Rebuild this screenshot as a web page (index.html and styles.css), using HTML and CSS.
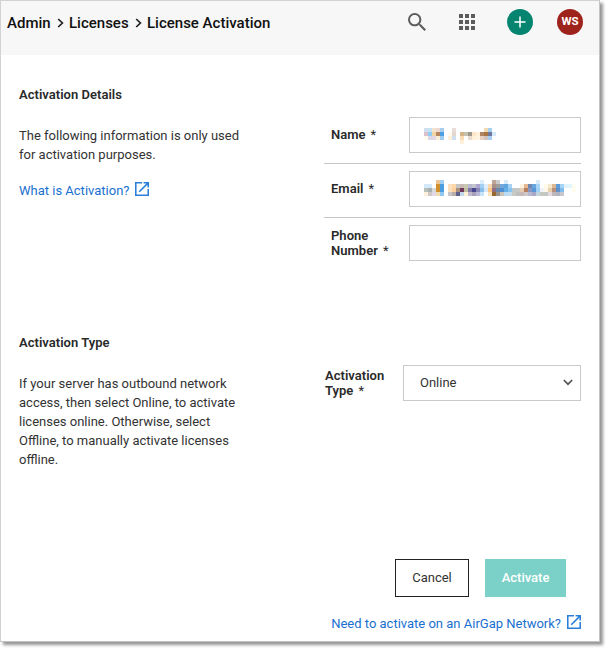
FILE: index.html
```html
<!DOCTYPE html>
<html lang="en">
<head>
<meta charset="utf-8">
<title>License Activation</title>
<link rel="stylesheet" href="styles.css">
</head>
<body>
<div class="window">
  <header class="topbar">
    <nav class="crumbs">
      <span class="crumb crumb-admin">Admin</span>
      <svg class="sep" viewBox="0 0 7 10"><path d="M1.2 1 5.4 5 1.2 9"/></svg>
      <span class="crumb crumb-licenses">Licenses</span>
      <svg class="sep" viewBox="0 0 7 10"><path d="M1.2 1 5.4 5 1.2 9"/></svg>
      <span class="crumb crumb-current">License Activation</span>
    </nav>
    <div class="tools">
      <svg class="search" viewBox="3 3 17.5 17.5"><path d="M15.5 14h-.79l-.28-.27A6.471 6.471 0 0 0 16 9.500 6.500 6.500 0 1 0 9.500 16c1.610 0 3.090-.59 4.230-1.570l.27.28v.79l5 4.990L20.490 19l-4.990-5zm-6 0C7.010 14 5 11.990 5 9.500S7.010 5 9.500 5 14 7.010 14 9.500 11.990 14 9.500 14z"/></svg>
      <svg class="apps" viewBox="0 0 16 16"><path d="M0 0h4v4H0zM6 0h4v4H6zM12 0h4v4h-4zM0 6h4v4H0zM6 6h4v4H6zM12 6h4v4h-4zM0 12h4v4H0zM6 12h4v4H6zM12 12h4v4h-4z"/></svg>
      <span class="circle add"><svg viewBox="0 0 12 12"><path d="M6 .5v11M.5 6h11"/></svg></span>
      <span class="circle avatar">WS</span>
    </div>
  </header>
  <section class="section">
    <div class="about">
      <h2>Activation Details</h2>
      <p class="text-details">The following information is only used<br>for activation purposes.</p>
      <a class="link">What is Activation?<svg class="ext" viewBox="3 3 18 18"><path d="M19 19H5V5h7V3H3v18h18v-9h-2v7zM14 3v2h3.590l-9.830 9.830 1.410 1.410L19 6.410V10h2V3h-7z"/></svg></a>
    </div>
    <div class="fields">
      <div class="row"><div class="label">Name<i>*</i></div><div class="input"><svg class="mosaic" id="name"></svg></div></div>
      <div class="row"><div class="label">Email<i>*</i></div><div class="input email"><svg class="mosaic" id="email"></svg></div></div>
      <div class="row"><div class="label">Phone<br>Number<i>*</i></div><div class="input"></div></div>
    </div>
  </section>
  <section class="section">
    <div class="about">
      <h2>Activation Type</h2>
      <p>If your server has outbound network<br>access, then select Online, to activate<br>licenses online. Otherwise, select<br>Offline, to manually activate licenses<br>offline.</p>
    </div>
    <div class="fields type">
      <div class="row"><div class="label">Activation<br>Type<i>*</i></div><div class="input select"><span>Online</span><svg class="caret" viewBox="0 0 10 7"><path d="M.8 1 5 5.200 9.200 1"/></svg></div></div>
    </div>
  </section>
  <footer class="footer">
    <div class="buttons"><span class="btn cancel">Cancel</span><span class="btn activate">Activate</span></div>
    <a class="link">Need to activate on an AirGap Network?<svg class="ext" viewBox="3 3 18 18"><path d="M19 19H5V5h7V3H3v18h18v-9h-2v7zM14 3v2h3.590l-9.830 9.830 1.410 1.410L19 6.410V10h2V3h-7z"/></svg></a>
  </footer>
</div>
<script src="mosaic.js"></script>
</body>
</html>
```
FILE: styles.css
```css
* { box-sizing: border-box; }
html { height: 100%; overflow: hidden; }
body { margin: 0; height: 100%; background: #fff; color: #333; font: 13px/19px Roboto, sans-serif; }
.window { width: 600px; height: 642px; border: 1px solid #d2d2d2; border-right-color: #c4c4c4; border-bottom-color: #c4c4c4; background: #fff; box-shadow: 3px 3px 3px rgba(0,0,0,.42); }
svg { display: block; flex: none; }
.topbar { height: 54px; background: #f7f7f7; display: flex; justify-content: space-between; padding: 8px 16px 0 6px; }
.crumbs { display: flex; align-items: center; height: 28px; font-size: 15px; font-weight: 500; color: #111; white-space: nowrap; }
.crumb-admin { width: 50px; }
.crumb-licenses { width: 66px; }
.sep { width: 7px; height: 10px; margin-right: 5px; fill: none; stroke: #222; stroke-width: 1.7; }
.tools { display: flex; align-items: center; height: 26px; }
.search { width: 18px; height: 18px; fill: #5c5c5c; margin-right: 33px; }
.apps { width: 16px; height: 16px; fill: #5c5c5c; margin-right: 32px; }
.circle { width: 26px; height: 26px; border-radius: 50%; display: flex; align-items: center; justify-content: center; }
.add { background: #058470; margin-right: 24px; }
.add svg { width: 12px; height: 12px; fill: none; stroke: #fff; stroke-width: 1.5; }
.avatar { background: #9f231d; color: #fff; font-size: 11.5px; font-weight: 700; padding-bottom: 1px; }
.section { height: 248px; display: flex; justify-content: space-between; padding: 0 18px; }
.about { padding-top: 30px; white-space: nowrap; }
h2 { margin: 0 0 22px; font: 600 13px/19px Roboto, sans-serif; color: #2a2a2a; letter-spacing: .03px; }
p { margin: 0 0 17px; }
.link { display: flex; align-items: center; color: #1a70cf; white-space: nowrap; }
.ext { width: 14px; height: 14px; margin-left: 6px; margin-top: -3px; fill: #2b7fd8; }
.fields { width: 257px; padding-top: 55px; }
.row { height: 54px; border-bottom: 1px solid #c6c6c6; display: flex; justify-content: space-between; padding: 7px 0 10px 7px; }
.row:last-child { border-bottom: 0; padding-bottom: 11px; }
.label { align-self: center; margin-bottom: 2px; font-weight: 600; line-height: 15px; color: #2a2a2a; letter-spacing: .03px; }
.row:last-child .label { margin-bottom: 0; }
.label i { font-style: normal; font-weight: 400; margin-left: 5px; }
.input { width: 172px; height: 36px; border: 1px solid #cacaca; padding: 10px 14px; }
.email { padding-top: 8px; }
.mosaic { width: 152px; height: 16px; shape-rendering: crispEdges; }
.type { width: 256px; }
.type .row { padding-left: 0; }
.select { width: 178px; display: flex; align-items: center; justify-content: space-between; padding: 0 7px 0 16px; }
.select span { padding-bottom: 2px; }
.caret { width: 10px; height: 7px; margin-bottom: 2px; fill: none; stroke: #555; stroke-width: 1.7; }
.footer { display: flex; flex-direction: column; align-items: flex-end; padding: 8px 18px 0 0; }
.buttons { display: flex; gap: 16px; margin: 0 15px 17px 0; }
.btn { height: 38px; display: flex; align-items: center; justify-content: center; padding-bottom: 2px; }
.cancel { width: 74px; border: 1px solid #222; }
.activate { width: 81px; background: #7bd1c8; color: #fff; font-weight: 500; }
```
FILE: mosaic.js
```js
// Obscured field values: one hex colour per 4px cell, "-" leaves the cell empty.
const mosaics = {
  name: [
    "cfdff0 c5e3f5 f5e3cf edd9cf a8cdec - - ecdcd8 - - - - - - - f3d9b0 a5cfee",
    "dcbfcc 90cdf2 f0d5a5 b8855f 4b9fe2 - fffbee e5d5d0 - d1b48a c5c2b0 9d988c fde6c9 fff0d8 b08460 a87440 6f769c d6e9fa",
    "fffbee dcd8ea e2d8e5 f8efd8 9fccef - fff0dc cfdff0 - fbdcb4 - eadccf fff0d8 fff5e2 ead2c2 d0c4c2 a8cff0",
    "- - - - - - - - - fff0de"
  ],
  email: [
    "- - - eac592 a5cdee - - - - - - - - - dbecfb - - bfa694 cccaca - d8ebfb - - - - - - - d8ebfb",
    "d3e8f9 d3e8f9 - d0902c 4a9de0 - f8e0c0 fcd8a8 c4c4c4 c9b8b5 c8c8b0 b8b8d0 c4c4cc a9a4d0 a5cff2 e0eefc f8d8b0 a89088 a09c98 70a8dc 5fa5e0 a8d2f5 - - fff2e0 e8b890 7088b0 68a5e0 a8d4f5 - fffbe8 f5e8d0 ddb890 5c9cdc a8d4f5 e0f2fa e0f6fc fffcf0",
    "b8c0bc a8b0b4 d8dad8 d0902c 4a9de0 - fbe0bc fcd0a0 a89080 703858 c0c0a0 8078a8 484890 8888b8 88c0ec d8e8f8 fcc880 907080 6888b0 5090d0 68b0e8 88c4f0 c0c8cc c8c8c4 e8ccb4 b88060 8898c0 5898d8 a0d0f4 f0f4f8 fff8e8 e8d0a8 b89080 6090c8 80bcec - - fffcf0",
    "fff0dc d0c8c8 e0d8e8 f0dcb0 90c8f0 - c8c4c8 b8b0a8 606090 c0d8e8 fff0d8 c0b8cc a8a0b8 b8b8d8 c8e4f8 - f8e4c0 986830 98948c c8c4b8 b8dcf4 c4dcec c8c8c4 c0c0c0 c8b8b8 d0c8c8 b8b8d0 a8a8c8 c0d4e0 c8c8c0 c4c8c4 e8d8e0 c0b8b8 b0b4c0 c8c8cc"
  ]
};
for (const [id, rows] of Object.entries(mosaics)) {
  const svg = document.getElementById(id);
  rows.forEach((row, y) => row.split(" ").forEach((color, x) => {
    if (color === "-") return;
    const cell = document.createElementNS("http://www.w3.org/2000/svg", "rect");
    const attrs = { x: x * 4, y: y * 4, width: 4, height: 4, fill: "#" + color };
    for (const key in attrs) cell.setAttribute(key, attrs[key]);
    svg.appendChild(cell);
  }));
}
```
